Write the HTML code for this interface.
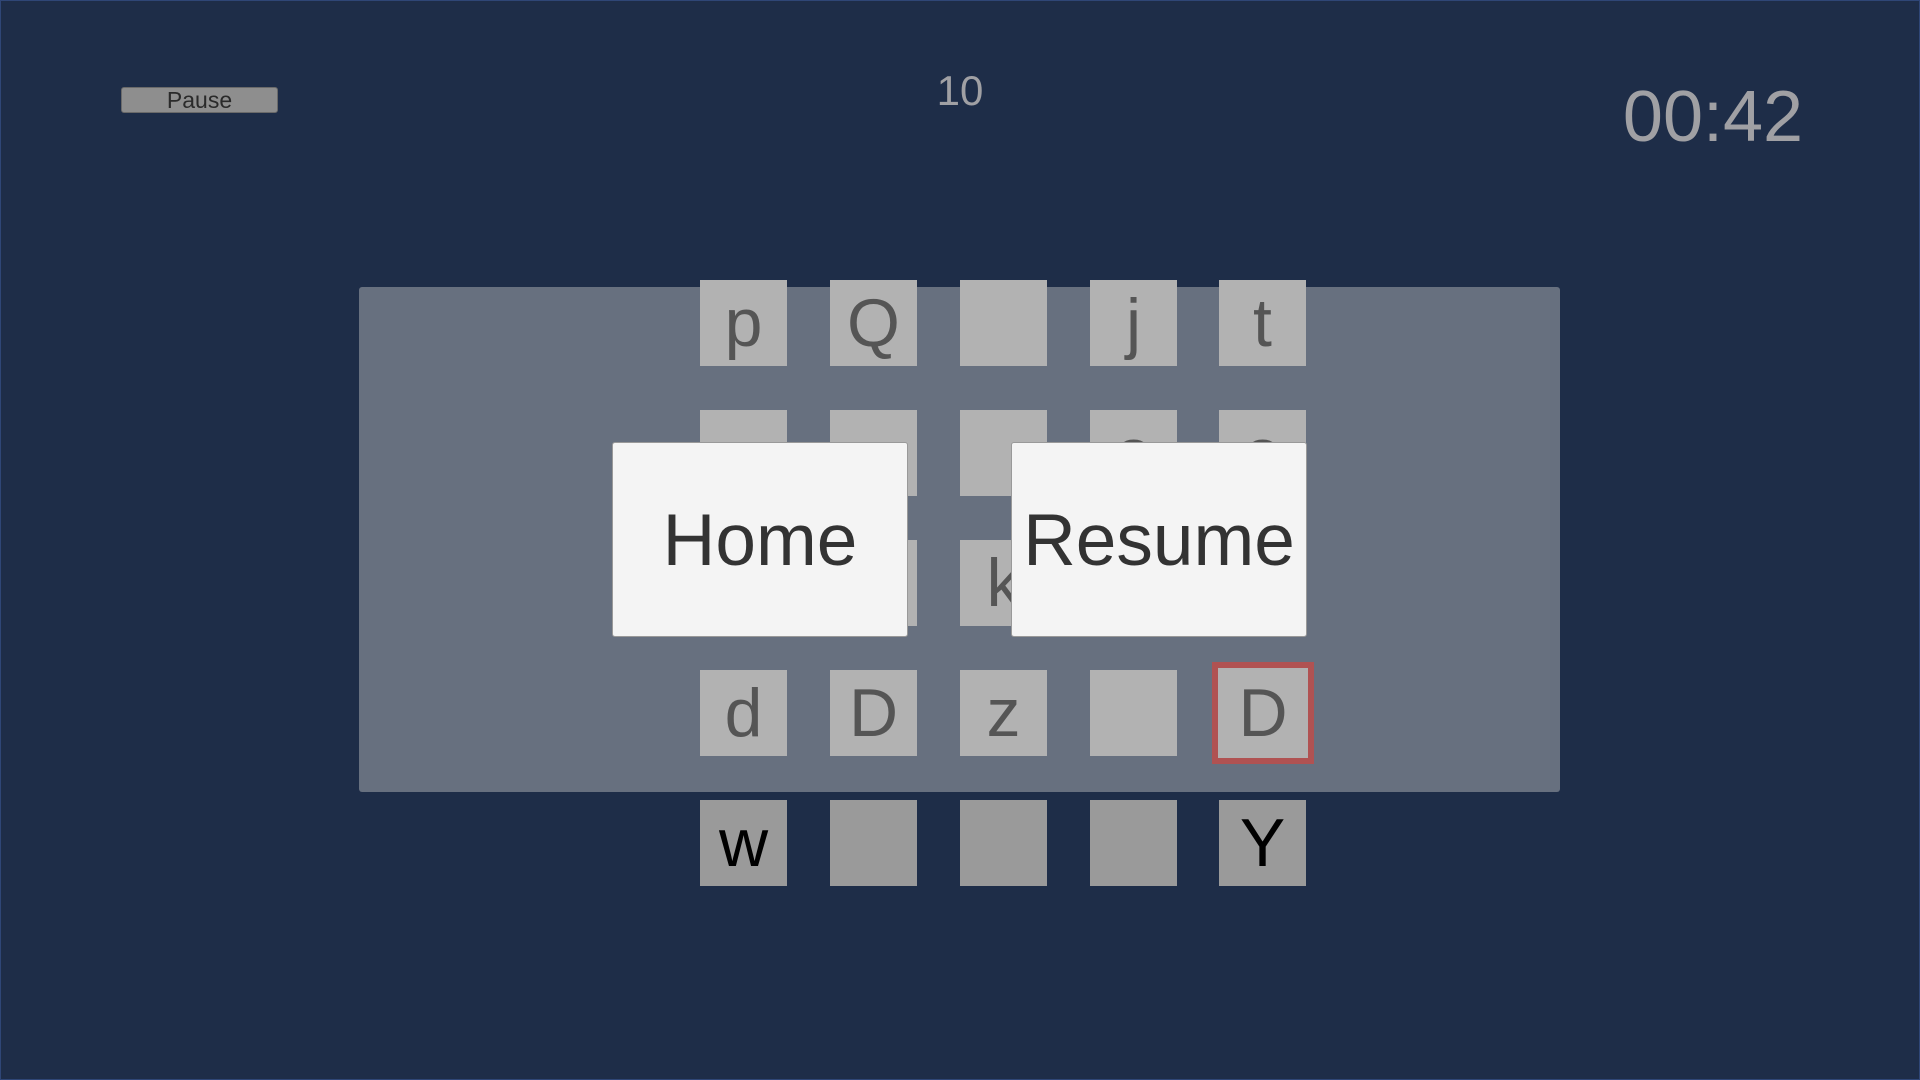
<!DOCTYPE html><html><head><style>
body{margin:0;width:1920px;height:1080px;background:#1e2d48;position:relative;overflow:hidden;font-family:"Liberation Sans",sans-serif}
.f{position:absolute;inset:0;border:1px solid #2f4676;box-sizing:border-box}
.a{position:absolute}
.t{position:absolute;width:87px;height:86px;background:#b2b2b2;color:#555;font-size:68px;text-align:center;line-height:86px}
.b{position:absolute;top:442px;height:195px;width:296px;background:#f4f4f4;border:1px solid #999;box-sizing:border-box;border-radius:3px;color:#333;font-size:73px;text-align:center;line-height:195px}
</style></head><body><div class="f"></div>
<div class="a" style="left:121px;top:87px;width:157px;height:26px;background:#8e8e8e;border:1px solid #6a6a6a;box-sizing:border-box;border-radius:3px;color:#2a2a2a;font-size:23px;text-align:center;line-height:24px">Pause</div>
<div class="a" style="left:900px;width:120px;top:67px;text-align:center;color:#a0a0a4;font-size:42px">10</div>
<div class="a" style="left:1600px;width:226px;top:76px;text-align:center;color:#a0a0a4;font-size:72px">00:42</div>
<div class="a" style="left:359px;top:287px;width:1201px;height:505px;background:#67707f;border-radius:3px"></div>
<div class="t" style="left:700px;top:280px">p</div><div class="t" style="left:830px;top:280px">Q</div><div class="t" style="left:960px;top:280px"></div><div class="t" style="left:1090px;top:280px">j</div><div class="t" style="left:1219px;top:280px">t</div>
<div class="t" style="left:700px;top:410px"></div><div class="t" style="left:830px;top:410px"></div><div class="t" style="left:960px;top:410px"></div><div class="t" style="left:1090px;top:410px">o</div><div class="t" style="left:1219px;top:410px">o</div>
<div class="t" style="left:700px;top:540px"></div><div class="t" style="left:830px;top:540px"></div><div class="t" style="left:960px;top:540px">k</div><div class="t" style="left:1090px;top:540px"></div><div class="t" style="left:1219px;top:540px"></div>
<div class="t" style="left:700px;top:670px">d</div><div class="t" style="left:830px;top:670px">D</div><div class="t" style="left:960px;top:670px">z</div><div class="t" style="left:1090px;top:670px"></div><div class="t" style="left:1212px;top:662px;width:102px;height:102px;border:6px solid #b05252;box-sizing:border-box;line-height:90px">D</div>
<div class="t" style="left:700px;top:800px;background:#9a9a9a;color:#000">w</div><div class="t" style="left:830px;top:800px;background:#9a9a9a"></div><div class="t" style="left:960px;top:800px;background:#9a9a9a"></div><div class="t" style="left:1090px;top:800px;background:#9a9a9a"></div><div class="t" style="left:1219px;top:800px;background:#9a9a9a;color:#000">Y</div>
<div class="b" style="left:612px">Home</div>
<div class="b" style="left:1011px">Resume</div>
</body></html>
